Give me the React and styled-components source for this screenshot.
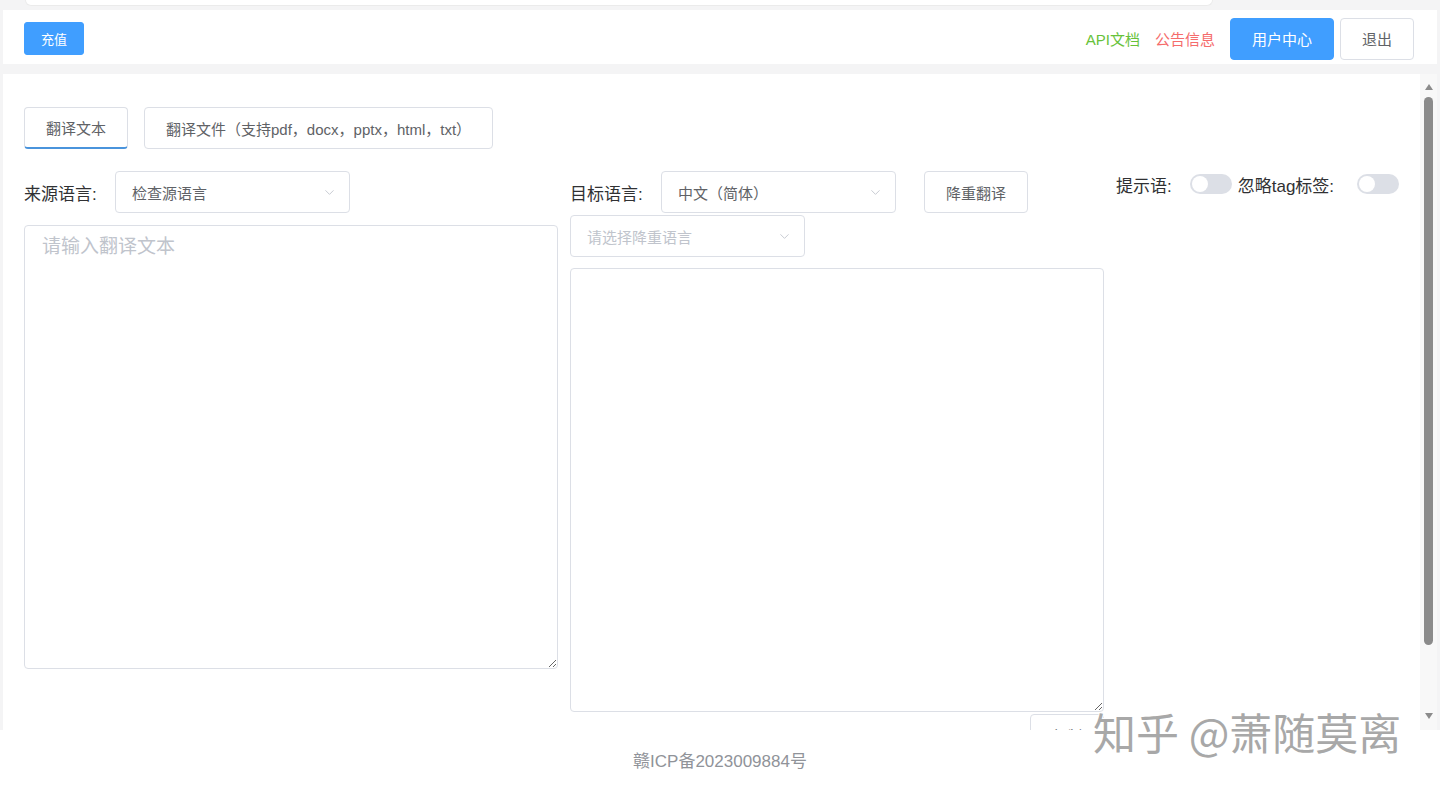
import React from 'react';
import styled, { createGlobalStyle } from 'styled-components';
import { ChevronDown } from 'lucide-react';

const GlobalStyle = createGlobalStyle`
  html, body {
    margin: 0;
    padding: 0;
    background: #ffffff;
  }
  body {
    font-family: "Liberation Sans", "Noto Sans CJK SC", sans-serif;
    color: #606266;
  }
  * {
    box-sizing: border-box;
  }
`;

const Page = styled.div`
  position: relative;
  width: 1440px;
  height: 788px;
  overflow: hidden;
`;

const Shell = styled.div`
  display: flex;
  flex-direction: column;
  background: #f4f4f5;
  padding: 0 3px;
`;

const TopStrip = styled.div`
  height: 6px;
  width: 1188px;
  margin: 0 0 4px 22px;
  background: #ffffff;
  border: 1px solid #ebebeb;
  border-top: none;
  border-radius: 0 0 12px 12px;
`;

const Header = styled.header`
  height: 54px;
  background: #ffffff;
  display: flex;
  align-items: center;
  justify-content: space-between;
  padding: 3px 23px 0 21px;
`;

const HeaderRight = styled.div`
  display: flex;
  align-items: center;
`;

const NavLink = styled.a`
  font-size: 15px;
  color: ${p => p.$color};
  margin-right: 15px;
  cursor: pointer;
`;

const Button = styled.button`
  font-family: inherit;
  height: ${p => p.$h || 42}px;
  padding: 0 ${p => p.$px || 22}px;
  font-size: ${p => p.$fs || 15}px;
  border-radius: ${p => p.$r || 4}px;
  border: 1px solid ${p => (p.$primary ? '#409eff' : '#dcdfe6')};
  background: ${p => (p.$primary ? '#409eff' : '#ffffff')};
  color: ${p => (p.$primary ? '#ffffff' : '#606266')};
  margin-left: ${p => p.$ml || 0}px;
  cursor: pointer;
  white-space: nowrap;
`;

const Panel = styled.main`
  margin-top: 10px;
  height: 656px;
  background: #ffffff;
  display: flex;
  overflow: hidden;
`;

const PanelBody = styled.div`
  flex: 1;
  overflow: hidden;
  padding: 33px 0 20px 21px;
`;

const ScrollBar = styled.div`
  width: 17px;
  flex-shrink: 0;
  background: #f8f8f8;
  display: flex;
  flex-direction: column;
  align-items: center;
  padding: 10px 0 11px;
`;

const Arrow = styled.span`
  width: 0;
  height: 0;
  border-left: 4px solid transparent;
  border-right: 4px solid transparent;
  ${p => (p.$down
    ? 'border-top: 6px solid #8b8b8b; margin-top: auto;'
    : 'border-bottom: 6px solid #8b8b8b;')}
`;

const Thumb = styled.span`
  width: 9px;
  height: 548px;
  margin-top: 7px;
  border-radius: 5px;
  background: #8b8b8b;
`;

const Tabs = styled.div`
  display: flex;
  gap: 16px;
`;

const Tab = styled.div`
  height: 42px;
  padding: 0 21px;
  display: flex;
  align-items: center;
  font-size: 15px;
  color: #606266;
  border: 1px solid #dcdfe6;
  border-radius: 4px;
  ${p => p.$active && 'border-bottom: 2px solid #4a94dc;'}
`;

const Workspace = styled.div`
  display: flex;
  gap: 12px;
  margin-top: 22px;
`;

const Column = styled.div`
  width: 534px;
  display: flex;
  flex-direction: column;
`;

const Row = styled.div`
  display: flex;
  align-items: center;
  margin-top: ${p => p.$mt || 0}px;
`;

const Label = styled.label`
  width: 91px;
  font-size: 17px;
  color: #303133;
  white-space: nowrap;
`;

const SelectBox = styled.div`
  width: 235px;
  height: 42px;
  border: 1px solid #dcdfe6;
  border-radius: 4px;
  display: flex;
  align-items: center;
  justify-content: space-between;
  padding: 0 12px 0 16px;
  font-size: 15px;
  color: ${p => (p.$placeholder ? '#c0c4cc' : '#606266')};
`;

const TextArea = styled.textarea`
  width: 534px;
  height: 444px;
  margin-top: ${p => p.$mt}px;
  border: 1px solid #dcdfe6;
  border-radius: 4px;
  padding: 8px 17px;
  font-family: inherit;
  font-size: 19px;
  line-height: 26px;
  color: #606266;
  resize: both;
  outline: none;

  &::placeholder {
    color: #c0c4cc;
  }
`;

const CopyRow = styled.div`
  display: flex;
  justify-content: flex-end;
  margin-top: 2px;
`;

const Options = styled.div`
  display: flex;
  align-items: center;
  height: 26px;
`;

const OptionLabel = styled.span`
  font-size: 17px;
  color: #303133;
  margin-right: ${p => p.$mr || 0}px;
  white-space: nowrap;
`;

const Switch = styled.span`
  width: 42px;
  height: 20px;
  border-radius: 10px;
  background: #dcdfe6;
  position: relative;
  margin-right: ${p => p.$mr || 0}px;
  flex-shrink: 0;

  &::after {
    content: '';
    position: absolute;
    top: 2px;
    left: 2px;
    width: 16px;
    height: 16px;
    border-radius: 50%;
    background: #ffffff;
  }
`;

const Footer = styled.footer`
  height: 58px;
  padding-top: 22px;
  text-align: center;
  font-size: 17px;
  line-height: 20px;
  color: #909399;
`;

const Watermark = styled.div`
  position: absolute;
  left: 1093px;
  top: 700px;
  font-family: "Noto Sans CJK SC", sans-serif;
  font-size: 43px;
  font-weight: 400;
  color: #a8a8a8;
  white-space: nowrap;
  pointer-events: none;
  text-shadow: 1px 0 #fff, -1px 0 #fff, 0 1px #fff, 0 -1px #fff;
`;

function Select({ value, placeholder }) {
  return (
    <SelectBox $placeholder={!value}>
      <span>{value || placeholder}</span>
      <ChevronDown size={15} strokeWidth={1.4} color="#c0c4cc" />
    </SelectBox>
  );
}

export default function App() {
  return (
    <Page>
      <GlobalStyle />
      <Shell>
        <TopStrip />
        <Header>
          <Button $primary $h={33} $px={16} $fs={13} $r={3}>充值</Button>
          <HeaderRight>
            <NavLink $color="#67c23a">API文档</NavLink>
            <NavLink $color="#f56c6c">公告信息</NavLink>
            <Button $primary $px={21}>用户中心</Button>
            <Button $ml={6} $px={21}>退出</Button>
          </HeaderRight>
        </Header>
        <Panel>
          <PanelBody>
            <Tabs>
              <Tab $active>翻译文本</Tab>
              <Tab>翻译文件（支持pdf，docx，pptx，html，txt）</Tab>
            </Tabs>
            <Workspace>
              <Column>
                <Row>
                  <Label>来源语言:</Label>
                  <Select value="检查源语言" />
                </Row>
                <TextArea $mt={12} placeholder="请输入翻译文本" />
              </Column>
              <Column>
                <Row>
                  <Label>目标语言:</Label>
                  <Select value="中文（简体）" />
                  <Button $ml={28} $px={21}>降重翻译</Button>
                </Row>
                <Row $mt={2}>
                  <Select placeholder="请选择降重语言" />
                </Row>
                <TextArea $mt={11} />
                <CopyRow>
                  <Button $px={21}>复制</Button>
                </CopyRow>
              </Column>
              <Column>
                <Options>
                  <OptionLabel $mr={18}>提示语:</OptionLabel>
                  <Switch $mr={6} />
                  <OptionLabel $mr={23}>忽略tag标签:</OptionLabel>
                  <Switch />
                </Options>
              </Column>
            </Workspace>
          </PanelBody>
          <ScrollBar>
            <Arrow />
            <Thumb />
            <Arrow $down />
          </ScrollBar>
        </Panel>
      </Shell>
      <Footer>赣ICP备2023009884号</Footer>
      <Watermark>知乎 @萧随莫离</Watermark>
    </Page>
  );
}
